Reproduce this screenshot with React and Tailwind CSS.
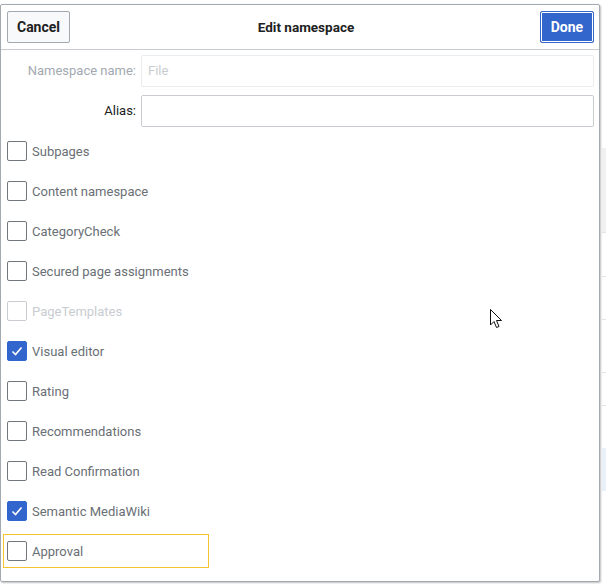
import React from "react";

const font = { fontFamily: 'Roboto, "Liberation Sans", Arial, sans-serif' };

function Check({ checked, disabled }) {
  if (checked) {
    return (
      <span className="w-[20px] h-[20px] rounded-[2px] bg-[#3366cc] border border-[#3366cc] flex items-center justify-center shrink-0">
        <svg width="14" height="14" viewBox="0 0 14 14">
          <path d="M2.5 7.5 L5.5 10.5 L11.5 3.5" fill="none" stroke="white" strokeWidth="1.6" />
        </svg>
      </span>
    );
  }
  return (
    <span
      className={
        "w-[20px] h-[20px] rounded-[2px] border bg-white shrink-0 " +
        (disabled ? "border-[#c8ccd1]" : "border-[#72777d]")
      }
    />
  );
}

const items = [
  ["Subpages"],
  ["Content namespace"],
  ["CategoryCheck"],
  ["Secured page assignments"],
  ["PageTemplates", false, true],
  ["Visual editor", true],
  ["Rating"],
  ["Recommendations"],
  ["Read Confirmation"],
  ["Semantic MediaWiki", true],
];

export default function App() {
  return (
    <div className="relative w-[606px] h-[584px] bg-white overflow-hidden flex" style={font}>
      <div className="mt-[4px] w-[600px] h-[578px] border border-[#a2a9b1] rounded-[2px] bg-white shadow-[1px_1px_2px_rgba(0,0,0,0.25)] flex flex-col shrink-0">
        <div className="h-[45px] border-b border-[#c8ccd1] flex items-center justify-between pr-[5px] pl-[6px]">
          <button className="h-[32px] w-[63px] border border-[#a2a9b1] bg-[#f8f9fa] rounded-[2px] text-[14px] font-bold text-[#202122]">
            Cancel
          </button>
          <div className="text-[13.5px] font-bold text-[#202122] pl-[2px]">Edit namespace</div>
          <button className="h-[32px] w-[54px] border border-[#3366cc] bg-[#3366cc] rounded-[2px] text-[14px] font-bold text-white shadow-[inset_0_0_0_1px_#fff]">
            Done
          </button>
        </div>
        <div className="flex flex-col pt-[5px]">
          <div className="flex items-center h-[32px] pr-[5px]">
            <div className="w-[135px] text-right text-[13px] text-[#a2a9b1]">Namespace name:</div>
            <div className="ml-[5px] flex-1 h-[32px] border border-[#eaecf0] rounded-[2px] flex items-center px-[6px] text-[13px] text-[#c8ccd1]">
              File
            </div>
          </div>
          <div className="flex items-center h-[32px] pr-[5px] mt-[8px]">
            <div className="w-[135px] text-right text-[13px] text-[#202122]">Alias:</div>
            <div className="ml-[5px] flex-1 h-[32px] border border-[#c8ccd1] rounded-[2px]" />
          </div>
          <div className="flex flex-col mt-[4px]">
            {items.map(([label, checked, disabled]) => (
              <div key={label} className="h-[40px] flex items-center pl-[6px] gap-[5px]">
                <Check checked={checked} disabled={disabled} />
                <span className={"text-[13px] pt-[1px] " + (disabled ? "text-[#c8ccd1]" : "text-[#6a6f75]")}>{label}</span>
              </div>
            ))}
            <div className="h-[40px] flex items-center pl-[2px]">
              <div className="h-[34px] w-[206px] border border-[#f5c230] flex items-center pl-[3px] gap-[5px]">
                <Check />
                <span className="text-[13px] pt-[1px] text-[#6a6f75]">Approval</span>
              </div>
            </div>
          </div>
        </div>
      </div>
      <div className="flex-1 flex flex-col pl-[2px]">
        <div className="h-[148px]" />
        <div className="h-[84px] bg-[#f0f0f0]" />
        <div className="h-[44px] border-t border-[#e4e4e4]" />
        <div className="h-[43px] border-t border-[#e4e4e4]" />
        <div className="h-[53px] border-t border-[#e4e4e4]" />
        <div className="h-[33px] border-t border-[#e4e4e4]" />
        <div className="h-[43px] border-t border-[#e4e4e4]" />
        <div className="h-[43px] bg-[#eaf0fa]" />
      </div>
      <svg className="absolute left-[490px] top-[309px]" width="13" height="20" viewBox="0 0 13 20">
        <path d="M0.5 0.5 L0.5 16 L4 12.5 L6.5 18.5 L9 17.5 L6.5 11.5 L11.5 11.5 Z" fill="white" stroke="#111" strokeWidth="1" />
      </svg>
    </div>
  );
}
